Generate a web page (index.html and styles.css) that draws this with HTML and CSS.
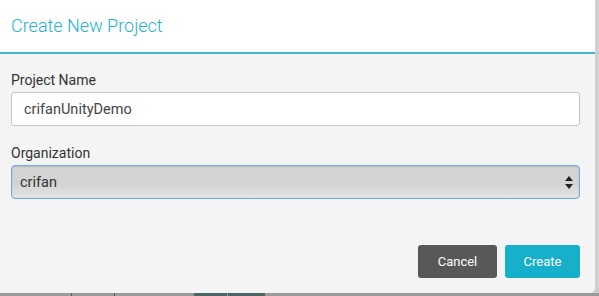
FILE: index.html
```html
<html>
    <head>
        <link rel="stylesheet" href="styles.css">
    </head>
    <body>
        <div class="dialog">
            <div class="dialog-header">
                <h3>Create New Project</h3>
            </div>
            <div class="dialog-body">
                <div class="field">
                    <label for="project-name">Project Name</label>
                    <input type="text" id="project-name" class="text-input" value="crifanUnityDemo">
                </div>
                <div class="field">
                    <label for="organization">Organization</label>
                    <div class="select-box" id="organization">
                        <span>crifan</span>
                        <svg class="select-arrows" width="8" height="13" viewBox="0 0 8 13">
                            <path d="M4 0 L8 5 L0 5 Z" fill="#222"/>
                            <path d="M4 13 L8 8 L0 8 Z" fill="#222"/>
                        </svg>
                    </div>
                </div>
            </div>
            <div class="dialog-footer">
                <button class="btn btn-cancel">Cancel</button>
                <button class="btn btn-create">Create</button>
            </div>
        </div>
        <div class="taskbar">
            <div class="task task-a"></div>
            <div class="task task-b"></div>
            <div class="task task-c"></div>
            <div class="task task-d"></div>
        </div>
    </body>
</html>
```

FILE: styles.css
```css
body {
    margin: 0;
    width: 599px;
    height: 296px;
    overflow: hidden;
    background: linear-gradient(to right, #a8a8a8, #d0d0d0);
    font-family: Roboto, "Liberation Sans", sans-serif;
}

.dialog {
    width: 595px;
    height: 293px;
    background-color: #f4f4f4;
    border-radius: 0 0 5px 0;
    display: flex;
    flex-direction: column;
}

.dialog-header {
    height: 52px;
    background-color: white;
    border-bottom: 2px solid #3fb8d2;
    display: flex;
    align-items: center;
    padding-left: 11px;
}

.dialog-header h3 {
    margin: 0 0 1px 0;
    font-size: 18px;
    font-weight: 300;
    color: #22b1cf;
}

.dialog-body {
    padding: 18px 15px 0 11px;
    display: flex;
    flex-direction: column;
    gap: 19px;
}

.field {
    display: flex;
    flex-direction: column;
    gap: 4px;
}

.field label {
    font-size: 14px;
    color: #333;
}

.text-input {
    height: 34px;
    box-sizing: border-box;
    border: 1px solid #c6c6c6;
    border-radius: 3px;
    background-color: white;
    padding: 0 12px;
    font-family: Roboto, "Liberation Sans", sans-serif;
    font-size: 14.5px;
    color: #444;
    outline: none;
}

.select-box {
    height: 34px;
    box-sizing: border-box;
    border: 1px solid #6eaaf0;
    border-radius: 4px;
    background: linear-gradient(to bottom, #d6d6d6 0%, #d3d3d3 55%, #e4e4e4 100%);
    box-shadow: inset 0 1px 2px rgba(0,0,0,0.15);
    display: flex;
    align-items: center;
    justify-content: space-between;
    padding: 0 6px 0 8px;
    font-size: 14.5px;
    color: #333;
}

.select-arrows {
    margin-top: 1px;
}

.dialog-footer {
    margin-top: auto;
    padding: 0 15px 15px 0;
    display: flex;
    justify-content: flex-end;
    gap: 8px;
}

.btn {
    height: 33px;
    border: none;
    border-radius: 3px;
    color: white;
    font-family: Roboto, "Liberation Sans", sans-serif;
    font-size: 13px;
}

.btn-cancel {
    width: 79px;
    background-color: #585858;
}

.btn-create {
    width: 75px;
    background-color: #16b0cb;
}

.taskbar {
    height: 3px;
    display: flex;
    background-color: #9a9a9a;
}

.task {
    height: 3px;
}

.task-a {
    width: 71px;
    border-right: 1px solid #555;
}

.task-b {
    width: 42px;
    border-right: 1px solid #555;
}

.task-c {
    width: 33px;
    margin-left: 79px;
    background-color: #4d6464;
}

.task-d {
    width: 37px;
    margin-left: 1px;
    background-color: #4d6464;
}
```
